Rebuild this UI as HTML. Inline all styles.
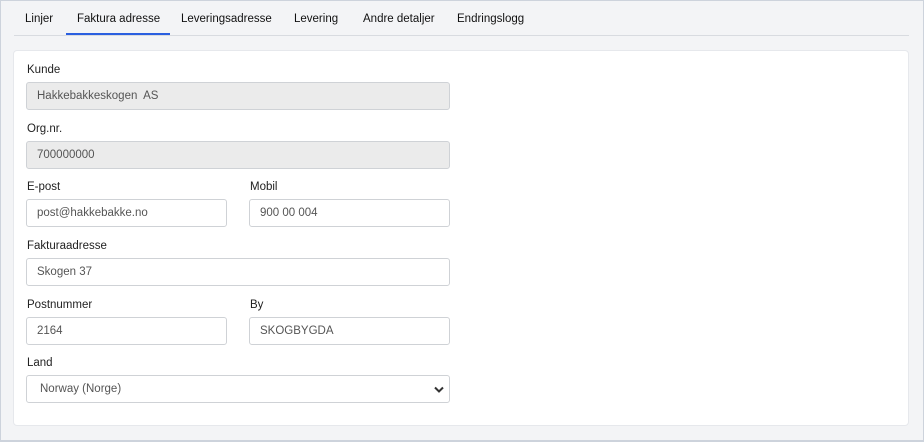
<!DOCTYPE html>
<html><head><meta charset="utf-8"><style>
*{box-sizing:border-box;margin:0;padding:0}
html,body{width:924px;height:442px;overflow:hidden}
body{background:#f3f4f6;font-family:"Liberation Sans",sans-serif;font-size:11.5px;color:#222;position:relative;border:1px solid #cdd3dc;border-bottom-width:2px}
.tabs{position:absolute;left:13px;top:-1px;width:895px;height:36px;border-bottom:1px solid #d8dbe0}
.tab{position:absolute;top:13px;font-size:11.5px;color:#111}
.ul{position:absolute;left:52px;top:33px;width:104px;height:2px;background:#2a5fe0}
.card{position:absolute;left:12px;top:49px;width:896px;height:376px;background:#fff;border:1px solid #e6e8ec;border-radius:4px}
.lbl{position:absolute;font-size:11.5px;color:#222}
.in{position:absolute;height:28px;border:1px solid #cfd2d6;border-radius:3px;background:#fff;padding-left:10px;line-height:26px;color:#555;font-size:11.5px}
.dis{background:#ebebeb}
</style></head><body>
<div class="tabs">
<span class="tab" style="left:11px">Linjer</span>
<span class="tab" style="left:63px">Faktura adresse</span>
<span class="tab" style="left:167px">Leveringsadresse</span>
<span class="tab" style="left:280px">Levering</span>
<span class="tab" style="left:349px">Andre detaljer</span>
<span class="tab" style="left:443px">Endringslogg</span>
<div class="ul"></div>
</div>
<div class="card"></div>
<span class="lbl" style="left:26px;top:63px">Kunde</span>
<div class="in dis" style="left:25px;top:81px;width:424px">Hakkebakkeskogen&nbsp; AS</div>
<span class="lbl" style="left:26px;top:122px">Org.nr.</span>
<div class="in dis" style="left:25px;top:140px;width:424px">700000000</div>
<span class="lbl" style="left:26px;top:180px">E-post</span>
<div class="in" style="left:25px;top:198px;width:201px">post@hakkebakke.no</div>
<span class="lbl" style="left:249px;top:180px">Mobil</span>
<div class="in" style="left:248px;top:198px;width:201px">900 00 004</div>
<span class="lbl" style="left:26px;top:239px">Fakturaadresse</span>
<div class="in" style="left:25px;top:257px;width:424px">Skogen 37</div>
<span class="lbl" style="left:26px;top:298px">Postnummer</span>
<div class="in" style="left:25px;top:316px;width:201px">2164</div>
<span class="lbl" style="left:249px;top:298px">By</span>
<div class="in" style="left:248px;top:316px;width:201px">SKOGBYGDA</div>
<span class="lbl" style="left:26px;top:356px">Land</span>
<div class="in" style="left:25px;top:374px;width:424px;padding-left:13px">Norway (Norge)
<svg style="position:absolute;right:5px;top:10px" width="10" height="7" viewBox="0 0 10 7"><path d="M1 1.5L5 5.5L9 1.5" fill="none" stroke="#333" stroke-width="2"/></svg></div>
</body></html>
